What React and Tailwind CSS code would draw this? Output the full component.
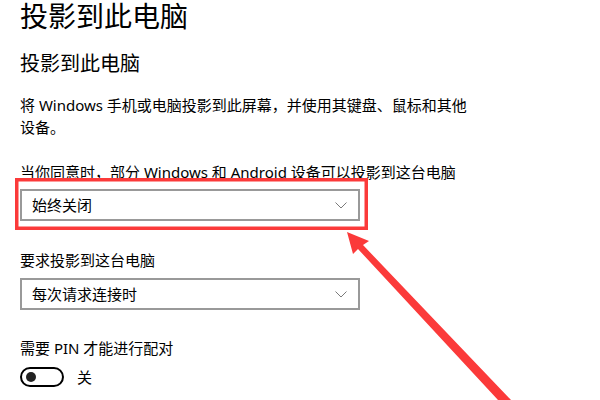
import { ChevronDown } from 'lucide-react'

const font = { fontFamily: '"Noto Sans", "Noto Sans CJK SC", sans-serif' }

const Select = ({ value }) => (
  <div className="flex h-[32px] w-[340px] items-center justify-between border-2 border-[#999999] bg-white pl-[10px] pr-[11px]">
    <span className="text-[15px] leading-none text-black">{value}</span>
    <svg width="12" height="7" viewBox="0 0 12 7" fill="none">
      <polyline points="0.5,0.5 6,6 11.5,0.5" stroke="#7a7a7a" strokeWidth="1" />
    </svg>
  </div>
)

export default function App() {
  return (
    <div className="relative h-[400px] w-[600px] overflow-hidden bg-white text-black" style={font}>
      <div className="flex flex-col pl-[20px]">
        <h1 className="text-[28px] leading-[32px] font-normal">投影到此电脑</h1>
        <h2 className="mt-[18px] text-[20px] leading-[28px] font-normal">投影到此电脑</h2>
        <p className="mt-[16px] text-[15px] leading-[22px]">
          将 Windows 手机或电脑投影到此屏幕，并使用其键盘、鼠标和其他
          <br />
          设备。
        </p>
        <div className="mt-[23px] text-[15px] leading-[22px]">
          当你同意时，部分 Windows 和 Android 设备可以投影到这台电脑
        </div>
        <div className="mt-[6px]">
          <Select value="始终关闭" />
        </div>
        <div className="mt-[28px] text-[15px] leading-[22px]">要求投影到这台电脑</div>
        <div className="mt-[7px]">
          <Select value="每次请求连接时" />
        </div>
        <div className="mt-[27px] text-[15px] leading-[22px]">需要 PIN 才能进行配对</div>
        <div className="mt-[8px] flex items-center gap-[13px]">
          <div className="flex h-[20px] w-[44px] items-center rounded-full border-2 border-black pl-[4px]">
            <div className="h-[10px] w-[10px] rounded-full bg-[#222]" />
          </div>
          <span className="text-[15px] leading-none">关</span>
        </div>
      </div>

      {/* annotation overlay */}
      <svg className="pointer-events-none absolute inset-0" width="600" height="400" viewBox="0 0 600 400">
        <rect x="16.75" y="179.75" width="349.5" height="48.5" fill="none" stroke="#fb3a3a" strokeWidth="3.5" />
        <polygon
          points="347,232 369,241 363,245 511,400 498,400 358,249 353,254"
          fill="#fb3a3a"
        />
      </svg>
    </div>
  )
}
